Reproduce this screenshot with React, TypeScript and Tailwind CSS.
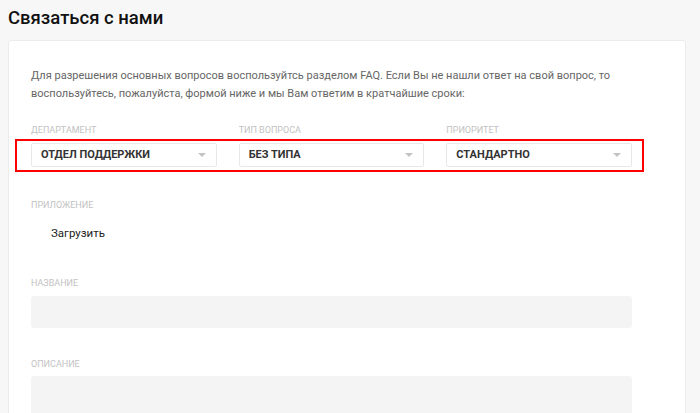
const Caret = () => (
  <svg width="8" height="4" viewBox="0 0 8 4" className="shrink-0">
    <path d="M0 0h8L4 4z" fill="#c4c4c4" />
  </svg>
);

const Select = ({ label, value }: { label: string; value: string }) => (
  <div className="flex flex-col">
    <span className="text-[9px] leading-[12px] uppercase text-[#c2c2c2]">{label}</span>
    <div className="mt-[7px] h-[24px] flex items-center justify-between pl-[9px] pr-[10px] bg-white border border-[#e8e8e8] rounded-[2px]">
      <span className="text-[11px] font-bold text-[#333]">{value}</span>
      <Caret />
    </div>
  </div>
);

const App = () => {
  return (
    <div
      className="h-[413px] bg-[#f7f7f7] pl-2 pr-[14px] overflow-hidden"
      style={{ fontFamily: "Roboto, 'Noto Sans', sans-serif" }}
    >
      <h1 className="pt-[6px] text-[18.5px] leading-[24px] font-medium text-[#111]">Связаться с нами</h1>
      <div className="mt-[10px] bg-white border border-[#ececec] rounded-[3px] pl-[22px] pt-[26px] pb-10">
        <div className="w-[601px]">
          <p className="text-[11px] leading-[18px] text-[#666]">
            <span className="whitespace-nowrap">
              Для разрешения основных вопросов воспользуйтсь разделом FAQ. Если Вы не нашли ответ на свой вопрос, то
            </span>
            <br />
            воспользуйтесь, пожалуйста, формой ниже и мы Вам ответим в кратчайшие сроки:
          </p>

          <div className="relative mt-[21px]">
            <div className="grid grid-cols-3 gap-[22px]">
              <Select label="Департамент" value="ОТДЕЛ ПОДДЕРЖКИ" />
              <Select label="Тип вопроса" value="БЕЗ ТИПА" />
              <Select label="Приоритет" value="СТАНДАРТНО" />
            </div>
            <div className="absolute left-[-16px] right-[-12px] top-[15px] h-[33px] border-2 border-[#ff0000] pointer-events-none" />
          </div>

          <div className="mt-[32px] text-[9px] leading-[12px] uppercase text-[#c2c2c2]">Приложение</div>
          <button className="mt-[14px] ml-[20px] text-[11.5px] leading-[16px] text-[#222]">Загрузить</button>

          <div className="mt-[33px] text-[9px] leading-[12px] uppercase text-[#c2c2c2]">Название</div>
          <div className="mt-[7px] h-[32px] bg-[#f4f4f4] rounded-[3px]" />

          <div className="mt-[30px] text-[9px] leading-[12px] uppercase text-[#c2c2c2]">Описание</div>
          <div className="mt-[6px] h-[80px] bg-[#f4f4f4] rounded-[3px]" />
        </div>
      </div>
    </div>
  );
};

export default App;
